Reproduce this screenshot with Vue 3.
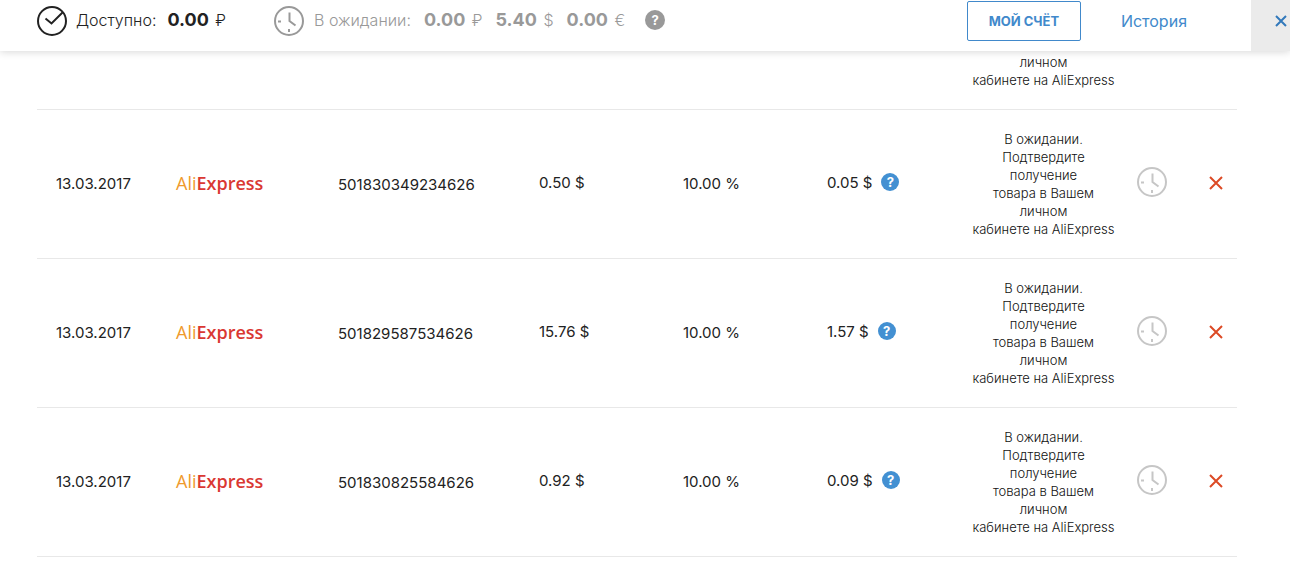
<template>
  <header class="topbar">
    <div class="balance available">
      <svg class="icon" viewBox="0 0 30 30">
        <circle cx="15" cy="15" r="14" />
        <path d="M8.5 12.5 L14.5 17.5 L25.5 6.5" />
      </svg>
      <span class="label">Доступно:</span>
      <span class="money"><b>0.00</b> ₽</span>
    </div>
    <div class="balance pending">
      <svg class="icon" viewBox="0 0 30 30">
        <circle cx="15" cy="15" r="14" />
        <path d="M15.5 6.5 V15 L21.5 19.5 M4 15.5 H7 M15 23 V26" />
      </svg>
      <span class="label">В ожидании:</span>
      <span v-for="(sum, i) in pending" :key="i" class="money"><b>{{ sum.value }}</b> {{ sum.sign }}</span>
      <button type="button" class="help help-gray">?</button>
    </div>
    <nav class="actions">
      <button type="button" class="account">МОЙ СЧЁТ</button>
      <a href="#history" class="history">История</a>
    </nav>
    <button type="button" class="close" aria-label="Закрыть">
      <svg viewBox="0 0 12 12" width="12" height="12">
        <path d="M1 1 L11 11 M11 1 L1 11" />
      </svg>
    </button>
  </header>

  <main class="content">
    <table class="orders">
      <colgroup>
        <col class="c-date" />
        <col class="c-shop" />
        <col class="c-number" />
        <col class="c-sum" />
        <col class="c-rate" />
        <col class="c-cashback" />
        <col class="c-status" />
        <col class="c-clock" />
        <col class="c-remove" />
      </colgroup>
      <tbody>
        <tr class="tail">
          <td colspan="6"></td>
          <td class="status">личном<br />кабинете на AliExpress</td>
          <td colspan="2"></td>
        </tr>
        <tr v-for="order in orders" :key="order.number">
          <td class="date">{{ order.date }}</td>
          <td class="shop"><span class="logo"><span class="ali">Ali</span>Express</span></td>
          <td class="number">{{ order.number }}</td>
          <td class="sum">{{ order.sum }} $</td>
          <td class="rate">10.00 %</td>
          <td class="sum">
            <div class="cashback">
              <span>{{ order.cashback }} $</span>
              <button type="button" class="help">?</button>
            </div>
          </td>
          <td class="status">
            В ожидании.<br />Подтвердите<br />получение<br />товара в Вашем<br />личном<br />кабинете на AliExpress
          </td>
          <td class="clock">
            <svg class="icon" viewBox="0 0 30 30">
              <circle cx="15" cy="15" r="14" />
              <path d="M15.5 6.5 V15 L21.5 19.5 M4 15.5 H7 M15 23 V26" />
            </svg>
          </td>
          <td class="remove">
            <button type="button" aria-label="Удалить">
              <svg viewBox="0 0 14 14" width="14" height="14">
                <path d="M1 1 L13 13 M13 1 L1 13" />
              </svg>
            </button>
          </td>
        </tr>
      </tbody>
    </table>
  </main>
</template>

<script setup>
import { ref } from "vue"

const pending = ref([
  { value: "0.00", sign: "₽" },
  { value: "5.40", sign: "$" },
  { value: "0.00", sign: "€" }
])

const orders = ref([
  { date: "13.03.2017", number: "501830349234626", sum: "0.50", cashback: "0.05" },
  { date: "13.03.2017", number: "501829587534626", sum: "15.76", cashback: "1.57" },
  { date: "13.03.2017", number: "501830825584626", sum: "0.92", cashback: "0.09" }
])
</script>

<style>
body {
  margin: 0;
  background: #fff;
  color: #222;
  font-family: Inter, "Noto Sans", sans-serif;
}
</style>

<style scoped>
button {
  padding: 0;
  border: none;
  background: none;
  font-family: inherit;
  cursor: pointer;
}
svg {
  display: block;
  fill: none;
}
.icon {
  width: 30px;
  height: 30px;
  flex: none;
  stroke: currentColor;
  stroke-width: 2;
}
.topbar {
  position: relative;
  z-index: 1;
  display: flex;
  align-items: center;
  height: 51px;
  padding-left: 37px;
  background: #fff;
  box-shadow: 0 1px 8px rgba(0, 0, 0, 0.16);
}
.balance {
  display: flex;
  align-items: center;
  padding-bottom: 12px;
  font-size: 16px;
  font-weight: 300;
  white-space: nowrap;
}
.balance .icon {
  margin-top: 2px;
}
.available {
  width: 237px;
}
.pending {
  color: #999;
}
.label {
  margin-left: 9px;
}
.money {
  margin-left: 11px;
}
.pending .label {
  margin-left: 10px;
}
.pending .money {
  margin-left: 13px;
}
.money b {
  margin-right: 2px;
  font-size: 18px;
  font-weight: 700;
}
.help {
  width: 18px;
  height: 18px;
  flex: none;
  border-radius: 50%;
  background: #4390d2;
  color: #fff;
  font-size: 13px;
  font-weight: 700;
  line-height: 18px;
  text-align: center;
}
.help-gray {
  width: 20px;
  height: 20px;
  margin-left: 20px;
  background: #999;
  line-height: 20px;
}
.actions {
  display: flex;
  align-items: center;
  gap: 40px;
  margin-left: auto;
  margin-right: 64px;
  padding-bottom: 10px;
}
.account {
  box-sizing: border-box;
  width: 114px;
  height: 40px;
  border: 1px solid #4189cb;
  border-radius: 2px;
  color: #4189cb;
  font-size: 13px;
  font-weight: 700;
}
.history {
  color: #4189cb;
  font-size: 16px;
  text-decoration: none;
}
.close {
  display: flex;
  align-items: center;
  justify-content: flex-end;
  align-self: stretch;
  box-sizing: border-box;
  width: 39px;
  padding: 0 3px 10px 0;
  background: #ebebeb;
}
.close svg {
  stroke: #3279bb;
  stroke-width: 2;
}
.content {
  padding: 0 53px 0 37px;
}
.orders {
  width: 100%;
  table-layout: fixed;
  border-collapse: separate;
  border-spacing: 0;
}
.c-date {
  width: 10%;
}
.c-shop {
  width: 13.5%;
}
.c-number {
  width: 16.75%;
}
.c-sum,
.c-rate {
  width: 12%;
}
.c-cashback {
  width: 12.5%;
}
.c-status {
  width: 14.25%;
}
.c-clock {
  width: 5.5%;
}
.c-remove {
  width: 3.5%;
}
td {
  padding: 20px 0 20px 19px;
  border-bottom: 1px solid #e8e8e8;
  font-size: 15px;
  white-space: nowrap;
}
.tail td {
  padding-top: 2px;
}
.date,
.shop,
.rate {
  padding-bottom: 22px;
}
.sum {
  padding-bottom: 24px;
}
.logo {
  color: #da3832;
  font-family: "Open Sans", sans-serif;
  font-size: 18px;
  font-weight: 600;
}
.ali {
  color: #ef9a2d;
  font-weight: 500;
}
.cashback {
  display: flex;
  align-items: center;
  gap: 9px;
}
.status {
  padding-left: 0;
  padding-right: 0;
  color: #111;
  font-size: 13px;
  font-weight: 300;
  line-height: 18px;
  text-align: center;
}
.clock {
  padding: 20px 0 24px 8px;
  color: #c6c6c6;
}
.remove {
  padding: 20px 0 22px;
}
.remove button {
  display: block;
  margin: 0 auto;
}
.remove svg {
  stroke: #dc4a25;
  stroke-width: 2;
}
</style>
